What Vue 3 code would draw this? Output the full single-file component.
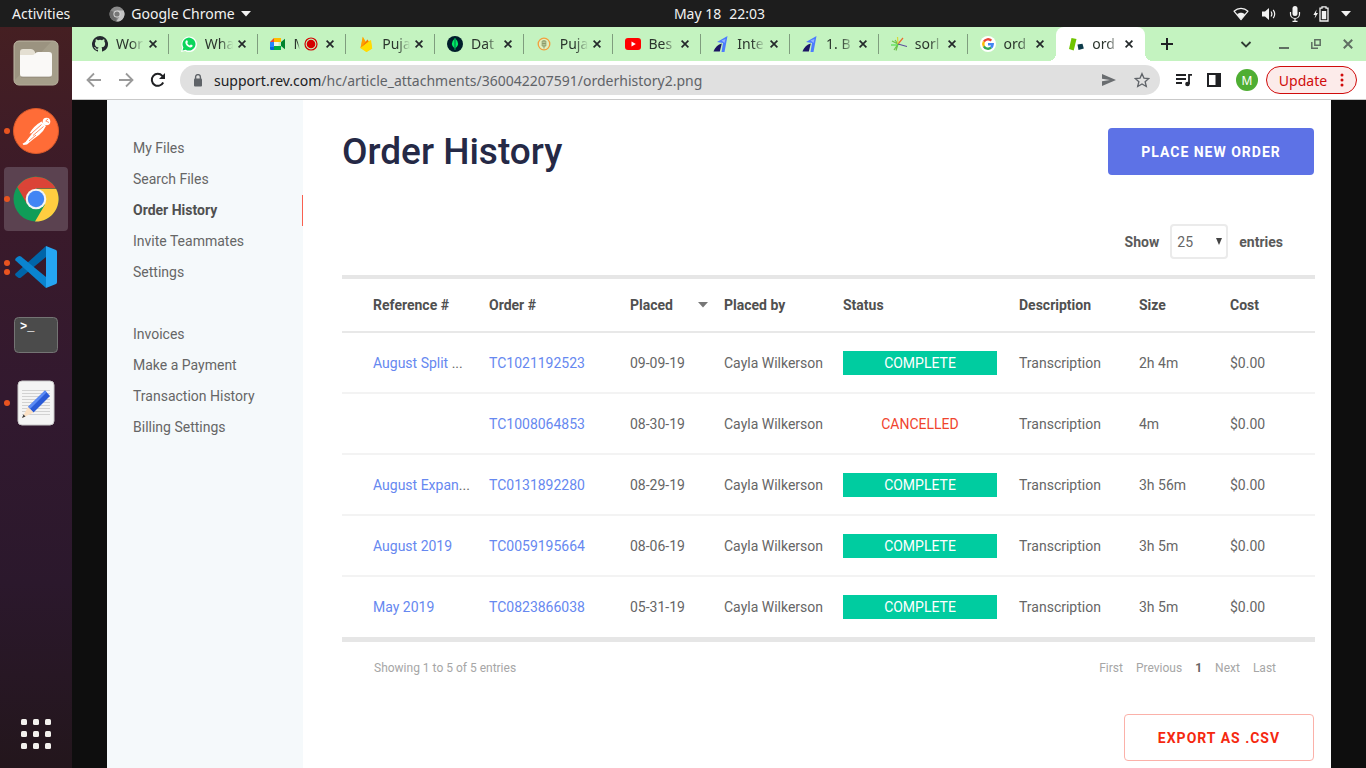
<script setup>
import { ref } from 'vue'

const tabs = [
  { icon: 'github', title: 'Wor' },
  { icon: 'whatsapp', title: 'Wha' },
  { icon: 'meet', title: 'M', recording: true },
  { icon: 'firebase', title: 'Puja' },
  { icon: 'mongo', title: 'Dat' },
  { icon: 'badge', title: 'Puja' },
  { icon: 'youtube', title: 'Bes' },
  { icon: 'blue', title: 'Inte' },
  { icon: 'blue', title: '1. B' },
  { icon: 'lines', title: 'sorl' },
  { icon: 'google', title: 'ord' },
  { icon: 'rev', title: 'ord', active: true },
]

const mainLinks = ['My Files', 'Search Files', 'Order History', 'Invite Teammates', 'Settings']
const billingLinks = ['Invoices', 'Make a Payment', 'Transaction History', 'Billing Settings']

const orders = [
  { name: 'August Split', more: ' ...', id: 'TC1021192523', placed: '09-09-19', status: 'COMPLETE', size: '2h 4m' },
  { name: '', more: '', id: 'TC1008064853', placed: '08-30-19', status: 'CANCELLED', size: '4m' },
  { name: 'August Expan', more: '...', id: 'TC0131892280', placed: '08-29-19', status: 'COMPLETE', size: '3h 56m' },
  { name: 'August 2019', more: '', id: 'TC0059195664', placed: '08-06-19', status: 'COMPLETE', size: '3h 5m' },
  { name: 'May 2019', more: '', id: 'TC0823866038', placed: '05-31-19', status: 'COMPLETE', size: '3h 5m' },
]

const pageSize = ref('25')
</script>

<template>
  <div class="desktop">
    <header class="topbar">
      <div class="top-left">
        <button class="top-btn">Activities</button>
        <button class="top-btn app-btn">
          <svg width="16" height="16" viewBox="0 0 16 16">
            <circle cx="8" cy="8" r="7.5" fill="#8b8b8b" />
            <path d="M8 8L1.5 4.2A7.5 7.5 0 0 0 7.3 15.5z" fill="#6b6b6b" />
            <path d="M8 4.5h6.6A7.5 7.5 0 0 1 7.3 15.5L11 9.8z" fill="#c4c4c4" />
            <circle cx="8" cy="8" r="3.6" fill="#d8d8d8" />
            <circle cx="8" cy="8" r="2.6" fill="#777" />
          </svg>
          <span>Google Chrome</span>
          <svg width="10" height="6" viewBox="0 0 10 6"><path d="M0 0h10L5 5.5z" fill="#f2f2f2" /></svg>
        </button>
      </div>
      <button class="top-btn clock"><span>May 18</span><span>22:03</span></button>
      <button class="top-btn tray" aria-label="System menu">
        <svg width="16" height="14" viewBox="0 0 16 14">
          <path d="M1 4.2C5 .4 11 .4 15 4.2L8 12.6z" fill="none" stroke="#f2f2f2" stroke-width="1.2" stroke-linejoin="round" />
          <path d="M4 7.2c2.4-2 5.6-2 8 0l-4 5.4z" fill="#f2f2f2" />
        </svg>
        <svg width="16" height="14" viewBox="0 0 16 14">
          <path d="M1 4.5h3L8 1v12L4 9.5H1z" fill="#f2f2f2" />
          <path d="M10 4.5q1.8 2.5 0 5M12.2 2.8q3 4.2 0 8.4" fill="none" stroke="#f2f2f2" stroke-width="1.2" />
        </svg>
        <svg width="12" height="16" viewBox="0 0 12 16">
          <rect x="3.5" y="0" width="5" height="10" rx="2.5" fill="#f2f2f2" />
          <path d="M1.5 6v2a4.5 4.5 0 0 0 9 0V6M6 12.5V15M3.5 15.3h5" fill="none" stroke="#f2f2f2" stroke-width="1.2" />
        </svg>
        <svg width="16" height="16" viewBox="0 0 16 16">
          <path d="M3.6 3.5L.4 9H2.4L1.6 12.5 5 7H3z" fill="#f2f2f2" />
          <path d="M7 2.2h2V.8h4v1.4h2v12.8H7z" fill="none" stroke="#f2f2f2" stroke-width="1.3" />
          <rect x="8.8" y="5" width="4.4" height="8.2" fill="#f2f2f2" />
        </svg>
        <svg width="10" height="6" viewBox="0 0 10 6"><path d="M0 0h10L5 5.5z" fill="#f2f2f2" /></svg>
      </button>
    </header>

    <div class="workspace">
      <nav class="dock" aria-label="Dock">
        <button class="dock-item" aria-label="Files">
          <svg width="46" height="46" viewBox="0 0 46 46">
            <rect x="1" y="1" width="44" height="44" rx="5" fill="#9b9380" stroke="#c0baa6" />
            <path d="M2 40L38 2h4q3 0 3 3v36q0 4-4 4H6q-4 0-4-4z" fill="#aaa38f" opacity=".7" />
            <path d="M7 12q0-3 3-3h8q2 0 3 1.500l1 1.500v6H7z" fill="#e4dfd2" />
            <path d="M7 15h12q2 0 3-1.500T25 12h11q3 0 3 3v19q0 3-3 3H10q-3 0-3-3z" fill="#faf9f7" />
            <path d="M8 37h30" stroke="#7e7766" stroke-width="1" opacity=".6" />
          </svg>
        </button>
        <button class="dock-item" aria-label="Postman">
          <span class="dots"><i></i></span>
          <svg width="46" height="46" viewBox="0 0 46 46">
            <circle cx="23" cy="23" r="22.500" fill="#ff6c37" stroke="#d95a2b" />
            <circle cx="33.500" cy="13.500" r="3.800" fill="#fff" />
            <path d="M32.500 13l2.500-2M33 13l3 1.500" stroke="#ff6c37" stroke-width=".8" />
            <path d="M28.500 13.500l4.500 4.500-3 5-4 4-5.500 4-6.500 5.500-3.500.5-1-1.200 3-1.800 7-9-3 .5q4-7.500 12-12z" fill="#fff" />
            <path d="M19 25l9.500-8.500M20 27.500l10.500-9M16 33l7-6" stroke="#ff6c37" stroke-width=".8" />
          </svg>
        </button>
        <button class="dock-item current" aria-label="Google Chrome">
          <span class="dots"><i></i></span>
          <svg width="46" height="46" viewBox="0 0 46 46">
            <circle cx="23" cy="23" r="22.500" fill="#0f9d58" />
            <path d="M23 23L4.300 11A22.500 22.500 0 0 1 42.800 12.500H23z" fill="#db4437" />
            <path d="M23 13h20.200A22.500 22.500 0 0 1 22 45.500L31.700 29z" fill="#ffcd40" />
            <path d="M4.300 11L14 28 23 13z" fill="#db4437" />
            <circle cx="23" cy="23" r="10.300" fill="#f4f4f4" />
            <circle cx="23" cy="23" r="8.200" fill="#4285f4" />
          </svg>
        </button>
        <button class="dock-item" aria-label="Visual Studio Code">
          <span class="dots"><i></i><i></i></span>
          <svg width="46" height="46" viewBox="0 0 46 46">
            <path d="M2.500 29.500L33 2v11L8 33.500q-1.500 1-3 0l-2-1.500q-1.500-1.200-.5-2.500z" fill="#0065a9" />
            <path d="M2.500 16.500L33 44V33L8 12.500q-1.500-1-3 0l-2 1.500q-1.500 1.200-.5 2.500z" fill="#0a84cf" />
            <path d="M33 2l10 4q1 .5 1 2v30q0 1.500-1 2l-10 4z" fill="#25a5f2" />
          </svg>
        </button>
        <button class="dock-item" aria-label="Terminal">
          <svg width="46" height="46" viewBox="0 0 46 46">
            <rect x="1.500" y="5.500" width="43" height="35" rx="4" fill="#4b4b4b" stroke="#747474" />
            <text x="7" y="18" class="prompt">&gt;_</text>
          </svg>
        </button>
        <button class="dock-item" aria-label="Text Editor">
          <span class="dots"><i></i></span>
          <svg width="46" height="46" viewBox="0 0 46 46">
            <rect x="5" y="1" width="36" height="44" rx="4" fill="#f4f4f4" stroke="#c9c9c9" />
            <path d="M9 10.500h28M9 13.500h28M9 16.500h28M9 19.500h28M9 22.500h28M9 25.500h28M9 28.500h28M9 31.500h28M9 34.500h28" stroke="#d2d2d2" />
            <path d="M32 10.500l5 5.500L20.500 32.500 15 27z" fill="#2a5bd7" />
            <path d="M32 10.500l1.700 1.800L17 29l-2-2z" fill="#5b8bf5" />
            <path d="M15 27l5.500 5.500L9 38z" fill="#fbe0c4" />
            <path d="M10.500 34.500l2 2L9 38z" fill="#3a3a3a" />
          </svg>
        </button>
        <button class="dock-item apps" aria-label="Show Applications">
          <svg width="30" height="30" viewBox="0 0 30 30">
            <g fill="#f3f1ee">
              <rect v-for="n in 9" :key="n" :x="((n - 1) % 3) * 12" :y="Math.floor((n - 1) / 3) * 12" width="6" height="6" rx="1.500" />
            </g>
          </svg>
        </button>
      </nav>

      <section class="browser">
        <div class="tabstrip">
          <div class="tabs">
            <div v-for="(tab, i) in tabs" :key="i" class="tab" :class="{ active: tab.active, nosep: i >= 10 }">
              <svg class="favicon" width="16" height="16" viewBox="0 0 16 16">
                <template v-if="tab.icon === 'github'">
                  <path fill="#24292f" d="M8 0a8 8 0 0 0-2.530 15.590c.4.070.55-.17.55-.38v-1.490c-2.010.37-2.530-.49-2.690-.94-.09-.23-.48-.94-.82-1.130-.28-.15-.68-.52-.01-.53.63-.01 1.080.58 1.230.82.72 1.210 1.870.87 2.330.66.07-.52.28-.87.51-1.070-1.780-.2-3.640-.89-3.640-3.950 0-.87.31-1.590.82-2.150-.08-.2-.36-1.020.08-2.120 0 0 .67-.21 2.200.82a7.400 7.400 0 0 1 4 0c1.530-1.040 2.200-.82 2.200-.82.44 1.100.16 1.920.08 2.120.51.56.82 1.270.82 2.150 0 3.070-1.870 3.750-3.650 3.950.29.25.54.73.54 1.480v2.200c0 .21.15.46.55.38A8 8 0 0 0 8 0z" />
                </template>
                <template v-else-if="tab.icon === 'whatsapp'">
                  <path d="M0 16l1.200-4.200A7.800 7.800 0 1 1 4.200 15z" fill="#fff" />
                  <path d="M1.500 14.500l.9-3.100A6.500 6.500 0 1 1 4.700 13.700z" fill="#0bd65b" />
                  <path d="M5.600 4.300c.8-.5 1.200 1.300 1.300 1.800s-.9.800-.5 1.300c.6 1 1.300 1.600 2.300 2 .5.100.8-1 1.300-.8s1.700.8 1.600 1.100c-.2 1.700-1.900 2-3.200 1.500-2.200-.8-3.600-2.300-4-4.200-.2-1.200.5-2.400 1.200-2.700z" fill="#fff" />
                </template>
                <template v-else-if="tab.icon === 'meet'">
                  <path d="M0 6l4-4v4z" fill="#ea4335" />
                  <path d="M4 2h7v4H4z" fill="#ffba00" />
                  <path d="M0 6h4v5H0z" fill="#2684fc" />
                  <path d="M0 11h4v3H1q-1 0-1-1z" fill="#0066da" />
                  <path d="M4 10h7v4H4z" fill="#00ac47" />
                  <path d="M11 6l4-3.200v10.400L11 10z" fill="#00832d" />
                  <path d="M4 6h4.500v4H4z" fill="#e9f7e9" />
                </template>
                <template v-else-if="tab.icon === 'firebase'">
                  <path d="M2.500 12L4.800.8 8 6.500 9.500 3.500 11 6l2-2 1.200 8.500L8.500 16z" fill="#ffca28" />
                  <path d="M2.500 12L4.800.8 8 6.500z" fill="#ffa000" />
                  <path d="M2.500 12l7-8.500L11 6z" fill="#f57c00" />
                  <path d="M2.500 12l10-8 1.700 8.500L8.500 16z" fill="#ffdd00" />
                </template>
                <template v-else-if="tab.icon === 'mongo'">
                  <circle cx="8" cy="8" r="8" fill="#001e2b" />
                  <path d="M8 2q6 6 .3 10.500V14h-.6v-1.500Q2 8 8 2z" fill="#00ed64" />
                  <path d="M8 3v9.500" stroke="#00684a" />
                </template>
                <template v-else-if="tab.icon === 'badge'">
                  <circle cx="8" cy="8" r="5.800" fill="#dff0c0" stroke="#f29f3d" stroke-width="1.300" />
                  <path d="M6.200 5h3.600v5H6.200zM8 4v8.500M6.200 7.500h3.600" fill="none" stroke="#8b9a6a" stroke-width="1" />
                </template>
                <template v-else-if="tab.icon === 'youtube'">
                  <rect x="0" y="2" width="16" height="12" rx="3" fill="#f00" />
                  <path d="M6.500 5.500v5L10.800 8z" fill="#fff" />
                </template>
                <template v-else-if="tab.icon === 'blue'">
                  <path d="M4 6l10.500-6-3 16H8.500L10 7z" fill="#4d7cfe" />
                  <path d="M.5 15.500Q3 9 8.800 7.500l-2 8z" fill="#1b1464" />
                  <path d="M8.500 4.500l4-1.500-1 4z" fill="#8fb0ff" />
                </template>
                <template v-else-if="tab.icon === 'lines'">
                  <g fill="none" stroke-width="1.200">
                    <path d="M1 5l6 3-4 6M7 8L5 14.500M7 8L4 4" stroke="#6cc24a" />
                    <path d="M7 8l5-6" stroke="#ef6a2c" />
                    <path d="M7 8l-.5-7" stroke="#d6d83a" />
                    <path d="M7 8l9 2.500" stroke="#5b4a9b" />
                    <path d="M0 9h7" stroke="#55e04a" />
                  </g>
                </template>
                <template v-else-if="tab.icon === 'google'">
                  <circle cx="8" cy="8" r="8" fill="#fff" />
                  <g fill="none" stroke-width="2.400">
                    <path d="M11.300 4.700A4.700 4.700 0 0 0 3.900 5.700" stroke="#ea4335" />
                    <path d="M3.900 5.700a4.700 4.700 0 0 0 0 4.600" stroke="#fbbc05" />
                    <path d="M3.900 10.300a4.700 4.700 0 0 0 7.200 1.200" stroke="#34a853" />
                    <path d="M11.100 11.500A4.700 4.700 0 0 0 12.700 8.200H8" stroke="#4285f4" />
                  </g>
                </template>
                <template v-else>
                  <path d="M3.500 2l5 1-2.800 11.500L1 13z" fill="#6fc400" />
                  <path d="M9.500 8.500l5-.8 1.300 4.800-5.300 1.500z" fill="#0d3b4a" />
                </template>
              </svg>
              <span class="tab-title" :class="{ short: tab.recording }">{{ tab.title }}</span>
              <svg v-if="tab.recording" class="rec" width="14" height="14" viewBox="0 0 14 14">
                <circle cx="7" cy="7" r="6" fill="none" stroke="#d40000" stroke-width="1.200" />
                <circle cx="7" cy="7" r="4.300" fill="#d40000" />
              </svg>
              <button class="tab-close" aria-label="Close tab">
                <svg width="8" height="8" viewBox="0 0 8 8"><path d="M.6.6l6.800 6.800M7.400.6L.6 7.400" stroke="#24292b" stroke-width="1.700" /></svg>
              </button>
            </div>
          </div>
          <div class="window-controls">
            <button class="new-tab" aria-label="New tab">
              <svg width="12" height="12" viewBox="0 0 12 12"><path d="M6 0v12M0 6h12" stroke="#202124" stroke-width="2" /></svg>
            </button>
            <button class="tab-search" aria-label="Search tabs">
              <svg width="12" height="12" viewBox="0 0 12 12"><path d="M1.500 4L6 8.500 10.500 4" fill="none" stroke="#2f3b33" stroke-width="1.800" /></svg>
            </button>
            <button aria-label="Minimize">
              <svg width="10" height="12" viewBox="0 0 10 12"><path d="M0 10h10" stroke="#5f6f62" stroke-width="2" /></svg>
            </button>
            <button aria-label="Restore">
              <svg width="10" height="10" viewBox="0 0 10 10"><path d="M3.800.8h5.400v5.400H3.800zM.8 3v6.200H7" fill="none" stroke="#5f6f62" stroke-width="1.500" /></svg>
            </button>
            <button aria-label="Close window">
              <svg width="10" height="10" viewBox="0 0 10 10"><path d="M.8.8l8.400 8.400M9.200.8L.8 9.200" stroke="#5f6f62" stroke-width="2" /></svg>
            </button>
          </div>
        </div>

        <div class="toolbar">
          <button class="nav-btn" aria-label="Back">
            <svg width="16" height="16" viewBox="0 0 16 16"><path d="M15 8H2M8 1.500L1.500 8 8 14.500" fill="none" stroke="#9a9a9a" stroke-width="1.800" /></svg>
          </button>
          <button class="nav-btn" aria-label="Forward">
            <svg width="16" height="16" viewBox="0 0 16 16"><path d="M1 8h13M8 1.500L14.500 8 8 14.500" fill="none" stroke="#9a9a9a" stroke-width="1.800" /></svg>
          </button>
          <button class="nav-btn" aria-label="Reload">
            <svg width="16" height="16" viewBox="0 0 16 16">
              <path d="M13.200 10.500A6 6 0 1 1 12.300 3.800L13.500 5" fill="none" stroke="#202124" stroke-width="2" />
              <path d="M15 1v6H9z" fill="#202124" />
            </svg>
          </button>
          <div class="omnibox">
            <svg width="10" height="13" viewBox="0 0 10 13">
              <rect x="1" y="4.500" width="8" height="8" rx="1" fill="#5f6368" />
              <path d="M2.600 5V3a2.400 2.400 0 0 1 4.800 0v2" fill="none" stroke="#5f6368" stroke-width="1.400" />
            </svg>
            <a class="url" href="#"><b>support.rev.com</b>/hc/article_attachments/360042207591/orderhistory2.png</a>
            <button aria-label="Share">
              <svg width="14" height="12" viewBox="0 0 14 12"><path d="M0 0l14 6-14 6V7.300L8 6 0 4.700z" fill="#6a6d70" /></svg>
            </button>
            <button aria-label="Bookmark">
              <svg width="16" height="16" viewBox="0 0 24 24"><path d="M12 2.500l2.900 6.700 7.300.6-5.500 4.800 1.700 7.100L12 17.900l-6.400 3.800 1.700-7.100L1.800 9.800l7.300-.6z" fill="none" stroke="#5f6368" stroke-width="2" /></svg>
            </button>
          </div>
          <div class="actions">
            <button aria-label="Media controls">
              <svg width="16" height="14" viewBox="0 0 16 14">
                <path d="M0 2h10M0 6h10M0 10h6M13 11V1.800h3" fill="none" stroke="#202124" stroke-width="1.800" />
                <circle cx="11.500" cy="11" r="2.300" fill="#202124" />
              </svg>
            </button>
            <button aria-label="Side panel">
              <svg width="14" height="14" viewBox="0 0 14 14"><path d="M0 0h14v14H0zM2 2v10h6.500V2z" fill="#202124" fill-rule="evenodd" /></svg>
            </button>
            <button class="avatar">M</button>
            <button class="update">
              Update
              <svg width="4" height="14" viewBox="0 0 4 14"><g fill="#d00b0b"><circle cx="2" cy="2" r="1.500" /><circle cx="2" cy="7" r="1.500" /><circle cx="2" cy="12" r="1.500" /></g></svg>
            </button>
          </div>
        </div>

        <div class="viewport">
          <div class="page">
            <aside class="sidebar">
              <nav class="menu">
                <a v-for="l in mainLinks" :key="l" href="#" :class="{ selected: l === 'Order History' }">{{ l }}</a>
              </nav>
              <nav class="menu">
                <a v-for="l in billingLinks" :key="l" href="#">{{ l }}</a>
              </nav>
            </aside>

            <main class="content">
              <div class="heading">
                <h1>Order History</h1>
                <button class="place-order">PLACE NEW ORDER</button>
              </div>
              <div class="length">
                <label for="page-size">Show</label>
                <span class="select-wrap">
                  <select id="page-size" v-model="pageSize">
                    <option>25</option>
                    <option>50</option>
                  </select>
                  <svg width="6" height="7" viewBox="0 0 6 7"><path d="M0 0h6L3 7z" fill="#444" /></svg>
                </span>
                <span>entries</span>
              </div>

              <table>
                <colgroup>
                  <col class="c-ref" /><col class="c-order" /><col class="c-placed" /><col class="c-by" />
                  <col class="c-status" /><col class="c-desc" /><col class="c-size" /><col class="c-cost" />
                </colgroup>
                <thead>
                  <tr>
                    <th>Reference #</th>
                    <th>Order #</th>
                    <th>
                      <span class="sort">Placed
                        <svg width="10" height="6" viewBox="0 0 10 6"><path d="M0 0h10L5 5.500z" fill="#777" /></svg>
                      </span>
                    </th>
                    <th>Placed by</th>
                    <th>Status</th>
                    <th>Description</th>
                    <th>Size</th>
                    <th>Cost</th>
                  </tr>
                </thead>
                <tbody>
                  <tr v-for="o in orders" :key="o.id">
                    <td><a v-if="o.name" href="#">{{ o.name }}</a>{{ o.more }}</td>
                    <td><a href="#">{{ o.id }}</a></td>
                    <td>{{ o.placed }}</td>
                    <td>Cayla Wilkerson</td>
                    <td><span class="status" :class="o.status.toLowerCase()">{{ o.status }}</span></td>
                    <td>Transcription</td>
                    <td>{{ o.size }}</td>
                    <td>$0.00</td>
                  </tr>
                </tbody>
              </table>

              <div class="table-foot">
                <span>Showing 1 to 5 of 5 entries</span>
                <nav class="pager" aria-label="Pagination">
                  <a href="#">First</a>
                  <a href="#">Previous</a>
                  <a href="#" class="on">1</a>
                  <a href="#">Next</a>
                  <a href="#">Last</a>
                </nav>
              </div>
              <div class="export-row">
                <button class="export">EXPORT AS .CSV</button>
              </div>
            </main>
          </div>
        </div>
      </section>
    </div>
  </div>
</template>

<style>
body {
  margin: 0;
  background: #0e0e0e;
}
</style>

<style scoped>
* {
  box-sizing: border-box;
}
button {
  font: inherit;
  color: inherit;
  background: none;
  border: 0;
  padding: 0;
  display: flex;
  align-items: center;
  justify-content: center;
}
a {
  color: inherit;
  text-decoration: none;
}
svg {
  display: block;
  flex: none;
}
.desktop {
  display: flex;
  flex-direction: column;
  height: 100vh;
  overflow: hidden;
  font-family: "Noto Sans", "Open Sans", sans-serif;
}
.topbar {
  display: grid;
  grid-template-columns: 1fr auto 1fr;
  align-items: center;
  flex: none;
  height: 27px;
  padding: 0 15px 0 12px;
  background: #1d1d1d;
  color: #f2f2f2;
  font-size: 14px;
  line-height: 20px;
}
.top-left {
  display: flex;
  gap: 39px;
}
.app-btn {
  gap: 6px;
}
.clock {
  gap: 8px;
  margin-left: 76px;
}
.tray {
  gap: 12px;
  justify-self: end;
}
.workspace {
  display: flex;
  flex: 1;
  min-height: 0;
}
.dock {
  display: flex;
  flex-direction: column;
  gap: 4px;
  flex: none;
  width: 72px;
  padding: 4px 4px 2px;
  background: linear-gradient(#451f22 0%, #3a1a2a 25%, #32192f 50%, #2b182c 75%, #23161c 100%);
}
.dock-item {
  position: relative;
  width: 64px;
  height: 64px;
  border-radius: 4px;
}
.dock-item.current {
  background: #5b4250;
}
.dock-item.apps {
  margin-top: auto;
}
.dots {
  position: absolute;
  left: 0;
  top: 0;
  bottom: 0;
  display: flex;
  flex-direction: column;
  justify-content: center;
  gap: 3px;
}
.dots i {
  width: 6px;
  height: 6px;
  border-radius: 50%;
  background: #e95420;
}
.prompt {
  font: bold 12px "Liberation Mono", monospace;
  fill: #fff;
}
.browser {
  display: flex;
  flex-direction: column;
  flex: 1;
  min-width: 0;
}
.tabstrip {
  display: flex;
  flex: none;
  height: 34px;
  padding-left: 8px;
  background: #c4f3c0;
}
.tabs {
  display: flex;
  flex: 1;
  min-width: 0;
}
.tab {
  position: relative;
  display: flex;
  align-items: center;
  flex: 1;
  min-width: 0;
  padding: 0 12px;
  color: #2b352d;
  font-size: 14px;
  line-height: 20px;
}
.tab:not(.nosep)::after {
  content: "";
  position: absolute;
  right: 0;
  top: 7px;
  width: 1px;
  height: 20px;
  background: #7f9d7e;
}
.tab.active {
  background: #fff;
  border-radius: 8px 8px 0 0;
}
.tab.active::before,
.tab.active::after {
  content: "";
  position: absolute;
  top: auto;
  bottom: 0;
  width: 8px;
  height: 8px;
  background: radial-gradient(circle at 0 0, #c4f3c0 8px, #fff 8px);
}
.tab.active::before {
  left: -8px;
}
.tab.active::after {
  right: -8px;
  background: radial-gradient(circle at 100% 0, #c4f3c0 8px, #fff 8px);
}
.tab-title {
  flex: 1;
  min-width: 0;
  margin: 0 3px 0 8px;
  white-space: nowrap;
  mask-image: linear-gradient(to right, #000 50%, transparent 94%);
}
.tab-title.short {
  flex: none;
  width: 13px;
  margin-right: -3px;
  mask-image: linear-gradient(to right, #000 25%, transparent 45%);
}
.rec {
  margin-right: auto;
}
.window-controls {
  display: flex;
  align-items: center;
  flex: none;
  width: 221px;
  gap: 22px;
  padding: 0 13px 0 16px;
}
.new-tab {
  margin-right: auto;
}
.tab-search {
  margin-right: 5px;
}
.toolbar {
  display: flex;
  align-items: center;
  flex: none;
  height: 39px;
  padding: 0 9px 0 14px;
  gap: 16px;
  background: #fff;
  border-bottom: 1px solid #c9c9c9;
}
.omnibox {
  display: flex;
  align-items: center;
  flex: 1;
  min-width: 0;
  height: 30px;
  margin-left: -2px;
  padding: 0 10px 0 13px;
  gap: 18px;
  border-radius: 15px;
  background: #e0e0e0;
  color: #5f6368;
  font-size: 14px;
}
.url {
  flex: 1;
  min-width: 0;
  margin-left: -7px;
  overflow: hidden;
  white-space: nowrap;
}
.url b {
  font-weight: 400;
  color: #202124;
}
.actions {
  display: flex;
  align-items: center;
  gap: 15px;
}
.avatar {
  width: 22px;
  height: 22px;
  border-radius: 50%;
  background: #4fae33;
  color: #fff;
  font-size: 12px;
}
.update {
  width: 91px;
  height: 28px;
  gap: 13px;
  margin-left: -7px;
  border: 1px solid #d00b0b;
  border-radius: 14px;
  background: #fcebea;
  color: #d00b0b;
  font-size: 14px;
}
.viewport {
  flex: 1;
  min-height: 0;
  padding: 0 35px;
  overflow: hidden;
  background: #0e0e0e;
}
.page {
  display: flex;
  min-height: 100%;
  background: #fff;
  color: #666;
  font-family: Roboto, "Liberation Sans", sans-serif;
  font-size: 14px;
  line-height: 20px;
}
.sidebar {
  display: flex;
  flex-direction: column;
  gap: 31px;
  flex: none;
  width: 196px;
  padding-top: 33px;
  background: #f5f9fb;
}
.menu {
  display: flex;
  flex-direction: column;
}
.menu a {
  height: 31px;
  padding-left: 26px;
  line-height: 31px;
}
.menu a.selected {
  border-right: 1px solid #f9604f;
  color: #505050;
  font-weight: 700;
}
.content {
  flex: 1;
  min-width: 0;
  padding: 28px 17px 8px 39px;
}
.heading {
  display: flex;
  align-items: center;
  justify-content: space-between;
}
h1 {
  margin: 0;
  color: #252946;
  font-size: 37px;
  line-height: 46px;
  font-weight: 500;
}
.place-order,
.export {
  height: 47px;
  border-radius: 4px;
  font-size: 14px;
  font-weight: 700;
  letter-spacing: 1px;
}
.place-order {
  width: 206px;
  background: #5d72e6;
  color: #fff;
}
.length {
  display: flex;
  align-items: center;
  justify-content: flex-end;
  gap: 11px;
  margin: 49px 31px 16px 0;
  color: #5a5a5a;
  font-weight: 700;
}
.select-wrap {
  position: relative;
}
.select-wrap svg {
  position: absolute;
  right: 6px;
  top: 14px;
  pointer-events: none;
}
select {
  display: block;
  width: 58px;
  height: 35px;
  padding: 0 5px;
  appearance: none;
  border: 2px solid #ebebeb;
  border-radius: 4px;
  background: #fff;
  color: #666;
  font: 14px/20px Roboto, "Liberation Sans", sans-serif;
}
table {
  width: 100%;
  table-layout: fixed;
  border-collapse: separate;
  border-spacing: 0;
  border-top: 4px solid #e6e6e6;
  border-bottom: 5px solid #e6e6e6;
}
.c-ref { width: 147px; }
.c-order { width: 141px; }
.c-placed { width: 94px; }
.c-by { width: 119px; }
.c-status { width: 176px; }
.c-desc { width: 120px; }
.c-size { width: 91px; }
.c-cost { width: 85px; }
th,
td {
  padding: 0;
  text-align: left;
  white-space: nowrap;
}
th {
  height: 54px;
  border-bottom: 2px solid #e8e8e8;
  color: #505050;
  font-weight: 700;
}
td {
  height: 61px;
  border-bottom: 2px solid #f3f3f3;
}
tbody tr:last-child td {
  height: 60px;
  border-bottom: 0;
}
th:first-child,
td:first-child {
  padding-left: 31px;
}
td a {
  color: #6688f0;
}
.sort {
  display: flex;
  align-items: center;
  justify-content: space-between;
  padding-right: 16px;
}
.status {
  display: block;
  height: 24px;
  margin-right: 22px;
  line-height: 24px;
  text-align: center;
}
.complete {
  background: #00cca0;
  color: #fff;
}
.cancelled {
  color: #f0442e;
}
.table-foot {
  display: flex;
  justify-content: space-between;
  margin: 16px 38px 36px 32px;
  color: #a6a6a6;
  font-size: 12px;
}
.pager {
  display: flex;
  gap: 13px;
}
.pager .on {
  color: #666;
  font-weight: 700;
}
.export-row {
  display: flex;
  justify-content: flex-end;
}
.export {
  width: 190px;
  border: 1px solid #fbb1a9;
  color: #f5280f;
}
</style>
